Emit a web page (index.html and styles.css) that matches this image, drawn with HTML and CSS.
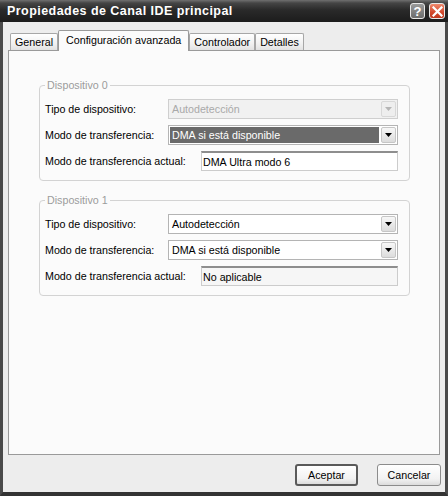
FILE: index.html
```html
<!DOCTYPE html>
<html lang="es">
<head>
<meta charset="utf-8">
<title>Propiedades de Canal IDE principal</title>
<link rel="stylesheet" href="styles.css">
</head>
<body>
<div class="window">
  <div class="titlebar">
    <span class="title">Propiedades de Canal IDE principal</span>
    <div class="tb-buttons">
      <span class="tb-btn help">?</span>
      <span class="tb-btn close"><svg width="11" height="11" viewBox="0 0 11 11"><path d="M1.5 1.5 L9.5 9.5 M9.5 1.5 L1.5 9.5" stroke="#fff" stroke-width="2.2" stroke-linecap="square"/></svg></span>
    </div>
  </div>
  <div class="client">
    <div class="tabs">
      <div class="tab">General</div>
      <div class="tab active">Configuración avanzada</div>
      <div class="tab">Controlador</div>
      <div class="tab">Detalles</div>
    </div>
    <div class="panel">
      <fieldset class="group">
        <legend>Dispositivo 0</legend>
        <div class="row">
          <span class="lbl">Tipo de dispositivo:</span>
          <div class="combo disabled"><span class="val">Autodetección</span><span class="drop"><svg width="7" height="4" viewBox="0 0 7 4"><path d="M0 0H7L3.5 4Z"/></svg></span></div>
        </div>
        <div class="row">
          <span class="lbl">Modo de transferencia:</span>
          <div class="combo selected"><span class="val">DMA si está disponible</span><span class="drop"><svg width="7" height="4" viewBox="0 0 7 4"><path d="M0 0H7L3.5 4Z"/></svg></span></div>
        </div>
        <div class="row">
          <span class="lbl">Modo de transferencia actual:</span>
          <div class="textbox">DMA Ultra modo 6</div>
        </div>
      </fieldset>
      <fieldset class="group second">
        <legend>Dispositivo 1</legend>
        <div class="row">
          <span class="lbl">Tipo de dispositivo:</span>
          <div class="combo"><span class="val">Autodetección</span><span class="drop"><svg width="7" height="4" viewBox="0 0 7 4"><path d="M0 0H7L3.5 4Z"/></svg></span></div>
        </div>
        <div class="row">
          <span class="lbl">Modo de transferencia:</span>
          <div class="combo"><span class="val">DMA si está disponible</span><span class="drop"><svg width="7" height="4" viewBox="0 0 7 4"><path d="M0 0H7L3.5 4Z"/></svg></span></div>
        </div>
        <div class="row">
          <span class="lbl">Modo de transferencia actual:</span>
          <div class="textbox readonly">No aplicable</div>
        </div>
      </fieldset>
    </div>
    <div class="buttons">
      <button class="btn default">Aceptar</button>
      <button class="btn">Cancelar</button>
    </div>
  </div>
</div>
</body>
</html>
```
FILE: styles.css
```css
html, body {
  margin: 0;
  padding: 0;
}
body {
  width: 448px;
  height: 496px;
  overflow: hidden;
  background: #2a2a2a;
  font-family: "Liberation Sans", Arial, sans-serif;
  font-size: 10.7px;
  color: #000;
}
.window {
  display: flex;
  flex-direction: column;
  height: 496px;
}
.titlebar {
  flex: none;
  height: 22px;
  display: flex;
  align-items: center;
  justify-content: space-between;
  padding: 0 3px 0 7px;
  background: linear-gradient(#707070 0, #454545 3px, #2a2a2a 45%, #1c1c1c 100%);
}
.title {
  color: #fff;
  font-weight: bold;
  font-size: 12.5px;
  letter-spacing: 0.45px;
}
.tb-buttons {
  display: flex;
  gap: 4px;
  align-items: center;
}
.tb-btn {
  box-sizing: border-box;
  width: 16px;
  height: 16px;
  border: 1px solid #e8e8e8;
  border-radius: 3px;
  display: flex;
  align-items: center;
  justify-content: center;
}
.help {
  width: 15px;
  background: linear-gradient(#9a9a9a, #6c6c6c);
  color: #fff;
  font-weight: bold;
  font-size: 13px;
  line-height: 1;
}
.close {
  background: linear-gradient(#f08a6e, #d2482c 60%, #c0391f);
}
.client {
  flex: 1;
  display: flex;
  flex-direction: column;
  background: #ededed;
  border: 3px solid #4a4a4a;
  border-top: 0;
  border-bottom: 4px solid #333;
}
.tabs {
  display: flex;
  align-items: flex-end;
  height: 21px;
  margin-top: 8px;
  margin-bottom: -1px;
  padding-left: 7px;
  position: relative;
  z-index: 1;
}
.tab {
  box-sizing: border-box;
  height: 17px;
  margin-bottom: 1px;
  padding: 0 4px;
  display: flex;
  align-items: center;
  border: 1px solid #a7a7a7;
  border-bottom: 0;
  border-radius: 2px 2px 0 0;
  background: linear-gradient(#ffffff, #f1f1f1 60%, #e2e2e2);
}
.tab.active {
  height: 21px;
  margin-bottom: 0;
  padding: 0 7px 2px;
  background: #fbfbfb;
  border-color: #9a9a9a;
}
.panel {
  box-sizing: border-box;
  height: 405px;
  margin: 0 5px;
  border: 1px solid #9a9a9a;
  background: #fbfbfb;
  padding: 28px 29px 0 30px;
}
.group {
  margin: 0;
  border: 1px solid #d3d3d3;
  border-radius: 4px;
  padding: 7px 11px 9px 5px;
}
.group.second {
  margin-top: 13px;
}
.group legend {
  padding: 0 2px;
  line-height: 13px;
  color: #9c9c9c;
}
.row {
  display: flex;
  align-items: center;
  justify-content: space-between;
  height: 20px;
  margin-bottom: 6px;
}
.row:last-child {
  margin-bottom: 0;
}
.combo {
  box-sizing: border-box;
  width: 230px;
  height: 20px;
  border: 1px solid #b4b4b4;
  background: #fff;
  display: flex;
  padding: 1px;
}
.combo .val {
  flex: 1;
  display: flex;
  align-items: center;
  padding-left: 2px;
}
.combo .drop {
  box-sizing: border-box;
  width: 15px;
  margin-left: 2px;
  border: 1px solid #c6c6c6;
  border-radius: 2px;
  background: linear-gradient(#f7f7f7, #dcdcdc);
  display: flex;
  align-items: center;
  justify-content: center;
}
.combo .drop path {
  fill: #000;
}
.combo.selected .val {
  background: #6a6a6a;
  color: #fff;
}
.combo.disabled {
  background: #f1f1f1;
  border-color: #cfcfcf;
}
.combo.disabled .val {
  color: #a9a9a9;
}
.combo.disabled .drop {
  background: #eeeeee;
  border-color: #d8d8d8;
}
.combo.disabled .drop path {
  fill: #b5b5b5;
}
.textbox {
  box-sizing: border-box;
  width: 197px;
  height: 20px;
  border: 1px solid #cccccc;
  border-top: 2px solid #8e8e8e;
  background: #fff;
  padding: 0 1px;
  display: flex;
  align-items: center;
}
.textbox.readonly {
  background: #f6f6f6;
}
.buttons {
  display: flex;
  justify-content: flex-end;
  gap: 19px;
  padding: 9px 4px 0 0;
}
.btn {
  box-sizing: border-box;
  width: 64px;
  height: 22px;
  margin: 0;
  padding: 0;
  font-family: "Liberation Sans", Arial, sans-serif;
  font-size: 10.7px;
  color: #000;
  border: 1px solid #8c8c8c;
  border-radius: 3px;
  background: linear-gradient(#ffffff, #f2f2f2 70%, #dcdcdc);
}
.btn.default {
  width: 63px;
  border: 2px solid #5a5a5a;
}
```
